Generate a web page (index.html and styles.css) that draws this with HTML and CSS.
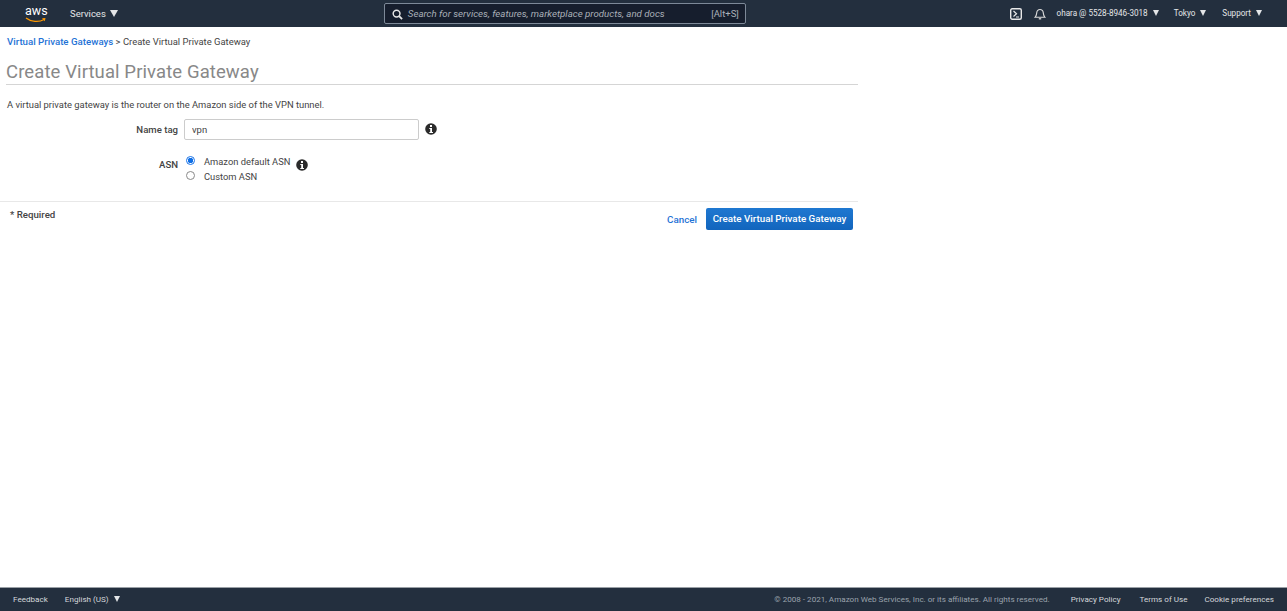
FILE: index.html
```html
<!DOCTYPE html>
<html lang="en">
<head>
<meta charset="utf-8">
<title>Create Virtual Private Gateway</title>
<link rel="stylesheet" href="styles.css">
</head>
<body>
<header class="topbar">
  <div class="logo">
    <span class="logo-text">aws</span>
    <svg class="logo-smile" width="22" height="6" viewBox="0 0 22 6"><path d="M1 1C6 5 14 5.500 19 2.500" fill="none" stroke="#f90" stroke-width="1.300"/><path d="M17 1.200L20.500 1L19.800 4.200Z" fill="#f90"/></svg>
  </div>
  <div class="nav-item services">Services <span class="caret big"></span></div>
  <div class="search">
    <svg class="search-icon" width="11" height="11" viewBox="0 0 12 12"><circle cx="5" cy="5" r="3.700" fill="none" stroke="#e6e6e6" stroke-width="1.600"/><path d="M7.800 7.800L11 11" stroke="#e6e6e6" stroke-width="2"/></svg>
    <span class="search-text">Search for services, features, marketplace products, and docs</span>
    <span class="search-key">[Alt+S]</span>
  </div>
  <div class="top-right">
    <svg class="shell" width="12" height="12" viewBox="0 0 12 12"><rect x="0.700" y="0.700" width="10.600" height="10.600" rx="1.500" fill="none" stroke="#e8e8e8" stroke-width="1.400"/><path d="M3.500 3L6.500 5.800L3.500 8.500M6 9H9" fill="none" stroke="#e8e8e8" stroke-width="1.200"/></svg>
    <svg class="bell" width="12" height="12" viewBox="0 0 12 12"><path d="M1 9.300C2.500 8 2.500 6.500 2.700 4.800C3 2.800 4.300 1.500 6 1.500C7.700 1.500 9 2.800 9.300 4.800C9.500 6.500 9.500 8 11 9.300Z" fill="none" stroke="#dcdcdc" stroke-width="1.100"/><path d="M4.800 10.800H7.200" stroke="#dcdcdc" stroke-width="1.300"/></svg>
    <div class="nav-item small account">ohara @ 5528-8946-3018 <span class="caret"></span></div>
    <div class="nav-item small region">Tokyo <span class="caret"></span></div>
    <div class="nav-item small support">Support <span class="caret"></span></div>
  </div>
</header>

<main class="content">
  <div class="panel">
    <nav class="crumbs"><a class="crumb-link">Virtual Private Gateways</a> &gt; Create Virtual Private Gateway</nav>
    <h1 class="title">Create Virtual Private Gateway</h1>
    <p class="intro">A virtual private gateway is the router on the Amazon side of the VPN tunnel.</p>
    <div class="row name-row">
      <label class="label" for="nametag">Name tag</label>
      <input class="input" id="nametag" type="text" value="vpn">
      <svg class="info name-info" width="12" height="12" viewBox="0 0 12 12"><circle cx="6" cy="6" r="5.800" fill="#2b2b2b"/><rect x="5" y="2" width="2" height="2" fill="#fff"/><path d="M4.300 5H7V9H8V10H4.300V9H5.200V6H4.300Z" fill="#fff"/></svg>
    </div>
    <div class="row asn-row">
      <div class="label asn-label">ASN</div>
      <div class="radios">
        <label class="radio"><input type="radio" name="asn" checked><span>Amazon default ASN</span></label>
        <label class="radio"><input type="radio" name="asn"><span>Custom ASN</span></label>
      </div>
      <svg class="info asn-info" width="12" height="12" viewBox="0 0 12 12"><circle cx="6" cy="6" r="5.800" fill="#2b2b2b"/><rect x="5" y="2" width="2" height="2" fill="#fff"/><path d="M4.300 5H7V9H8V10H4.300V9H5.200V6H4.300Z" fill="#fff"/></svg>
    </div>
    <div class="actions">
      <span class="required">* Required</span>
      <div class="buttons">
        <a class="cancel">Cancel</a>
        <button class="primary" type="button">Create Virtual Private Gateway</button>
      </div>
    </div>
  </div>
</main>

<footer class="footer">
  <span class="foot-link feedback">Feedback</span>
  <span class="foot-link lang">English (US) <span class="caret"></span></span>
  <span class="copyright">© 2008 - 2021, Amazon Web Services, Inc. or its affiliates. All rights reserved.</span>
  <span class="foot-link policy">Privacy Policy</span>
  <span class="foot-link terms">Terms of Use</span>
  <span class="foot-link cookies">Cookie preferences</span>
</footer>
</body>
</html>
```

FILE: styles.css
```css
* { box-sizing: border-box; }
html, body { height: 100%; }
body {
  margin: 0;
  height: 611px;
  display: flex;
  flex-direction: column;
  overflow: hidden;
  background: #fff;
  color: #444;
  font-family: Roboto, "Liberation Sans", sans-serif;
  font-size: 10px;
}
.topbar {
  height: 27px;
  flex: none;
  background: #232f3e;
  display: flex;
  align-items: center;
  color: #e4e6e8;
}
.logo {
  width: 22px;
  margin-left: 25px;
  height: 20px;
}
.logo-text {
  display: block;
  font-size: 12.500px;
  line-height: 14px;
  color: #fff;
  text-align: center;
}
.logo-smile { display: block; margin-top: -1px; }
.nav-item { white-space: nowrap; display: flex; align-items: center; margin-top: -1px; }
.services { margin-left: 23px; font-size: 9.500px; gap: 4px; }
.small { font-size: 8.150px; gap: 5px; }
.caret {
  display: inline-block;
  width: 0;
  height: 0;
  border-left: 3.500px solid transparent;
  border-right: 3.500px solid transparent;
  border-top: 6px solid #e4e6e8;
}
.caret.big { border-left-width: 4.500px; border-right-width: 4.500px; border-top-width: 7px; }
.search {
  margin-left: 266px;
  width: 362px;
  height: 21px;
  margin-top: -1px;
  border: 1px solid #7d8998;
  border-radius: 2px;
  background: #161e2d;
  display: flex;
  align-items: center;
  padding: 0 6px 0 7px;
}
.search-icon { flex: none; margin-top: 2px; }
.search-text {
  margin-left: 5px;
  flex: 1;
  font-style: italic;
  font-size: 9.700px;
  color: #aab0b8;
  white-space: nowrap;
}
.search-key { font-size: 9.500px; color: #aab0b8; }
.top-right { margin-left: auto; display: flex; align-items: center; padding-right: 25px; }
.shell { margin-right: 12px; }
.bell { margin-right: 11px; }
.account { margin-right: 15px; }
.region { margin-right: 16px; }
.content { flex: 1; min-height: 0; }
.panel { width: 858px; padding-top: 9px; }
.crumbs { margin-left: 7px; font-size: 9.450px; line-height: 12px; color: #444; }
.crumb-link { color: #1f73d6; font-weight: 500; font-size: 9.700px; }
.title {
  margin: 13px 0 0 6px;
  font-size: 18.500px;
  line-height: 22px;
  font-weight: 400;
  color: #888;
  padding-bottom: 1px;
  border-bottom: 1px solid #d5d5d5;
  letter-spacing: 0.100px;
}
.intro { margin: 14px 0 0 7px; font-size: 9.390px; line-height: 12px; color: #444; }
.row { display: flex; align-items: center; }
.label {
  width: 178px;
  text-align: right;
  font-size: 9.600px;
  font-weight: 500;
  color: #444;
}
.name-row { margin-top: 8px; height: 21px; }
.input {
  margin-left: 6px;
  width: 235px;
  height: 21px;
  border: 1px solid #ccc;
  border-radius: 2px;
  padding: 0 7px;
  font: 9.500px Roboto, sans-serif;
  color: #444;
}
.info { margin-left: 6px; flex: none; }
.name-info { margin-top: -2px; }
.asn-row { margin-top: 14px; align-items: flex-start; height: 30px; }
.asn-label { padding-top: 5px; }
.radios { margin-left: 7px; display: flex; flex-direction: column; }
.radio {
  display: flex;
  align-items: center;
  height: 15px;
  font-size: 9.350px;
  color: #444;
  white-space: nowrap;
}
.radio input {
  appearance: none;
  margin: -2px 9px 0 1px;
  width: 9px;
  height: 9px;
  border: 1px solid #8a8a8a;
  border-radius: 50%;
  background: #fff;
}
.radio input:checked {
  border-color: #1a73e8;
  background: radial-gradient(circle, #0f6fe6 0, #0f6fe6 2.500px, #fff 3px);
}
.asn-info { margin: 5px 0 0 6px; }
.actions {
  margin-top: 17px;
  border-top: 1px solid #e8e8e8;
  display: flex;
  justify-content: space-between;
  padding: 6px 5px 0 10px;
  align-items: flex-start;
}
.required { font-weight: 500; font-size: 9.700px; line-height: 14px; color: #444; }
.buttons { display: flex; align-items: center; gap: 9px; }
.cancel { color: #1f73d6; font-weight: 500; font-size: 9.800px; }
.primary {
  height: 22px;
  width: 147px;
  padding: 0 0 1px;
  border: 0;
  border-radius: 2px;
  background: linear-gradient(#1f78d1, #1265bd);
  color: #fff;
  font: 500 9.800px Roboto, sans-serif;
}
.footer {
  height: 24px;
  flex: none;
  background: #232f3e;
  border-top: 1px solid #9aa0a6;
  display: flex;
  align-items: center;
  color: #d5d8dc;
  font-size: 8.100px;
  padding: 0 13px 1px;
  white-space: nowrap;
}
.foot-link { display: flex; align-items: center; gap: 5px; }
.lang { margin-left: 17px; }
.copyright { margin-left: auto; color: #9ba3ad; }
.policy { margin-left: 21px; }
.terms { margin-left: 19px; }
.cookies { margin-left: 17px; }
```
